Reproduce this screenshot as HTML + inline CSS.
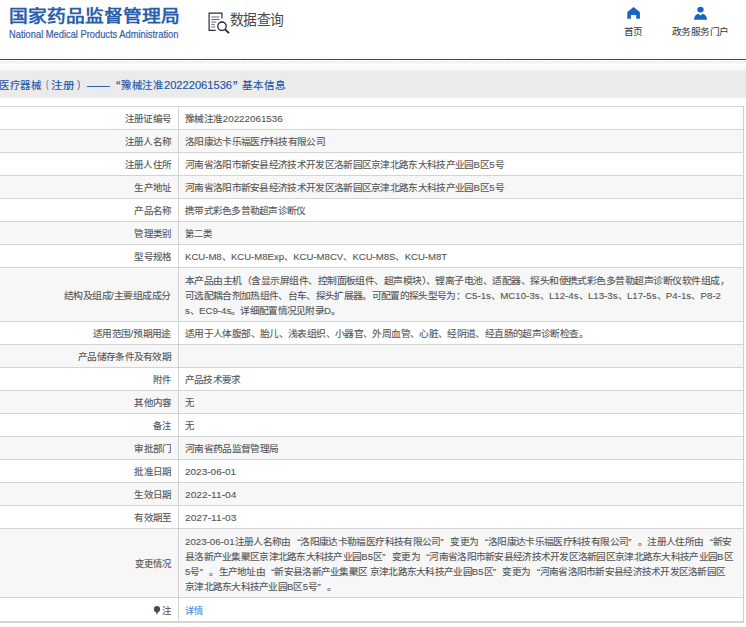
<!DOCTYPE html>
<html lang="zh-CN"><head><meta charset="utf-8">
<style>
*{margin:0;padding:0;box-sizing:border-box}
html,body{width:746px;height:627px;overflow:hidden;background:#fff;font-family:"Liberation Sans",sans-serif;color:#333;position:relative}
.abs{position:absolute}
#logo1{position:absolute;left:9px;top:6px;font-size:16.8px;transform-origin:0 0;font-weight:bold;color:#2a5eab;white-space:nowrap;line-height:22px}
#logo2{position:absolute;left:9px;top:28.8px;font-size:10px;transform-origin:0 0;color:#3560a8;-webkit-text-stroke:0.2px #3560a8;white-space:nowrap;line-height:11px}
#sqt{position:absolute;transform-origin:0 0;left:230px;top:10.3px;font-size:14.5px;color:#4a4a4a;line-height:20px;white-space:nowrap}
.nav{position:absolute;transform-origin:0 0;top:26.7px;font-size:9.2px;color:#333;line-height:11px;white-space:nowrap}
#bl{position:absolute;left:0;top:59px;width:746px;height:1px;background:#234f7c;box-shadow:0 -2px 2px #effbfd}
#hatch{position:absolute;left:0;top:61px;width:746px;height:2px;background:repeating-linear-gradient(135deg,#fff 0,#fff 1.3px,#e2e2e2 1.3px,#e2e2e2 2.33px)}
#grad{position:absolute;left:0;top:64px;width:746px;height:7px;background:linear-gradient(#fff,#f3f3f3)}
#bar{position:absolute;left:0;top:71px;width:746px;height:27px;background:#ebebeb}
.bp{position:absolute;transform-origin:0 0;top:78px;font-size:10.7px;color:#1d56a8;-webkit-text-stroke:0.15px #1d56a8;line-height:14px;white-space:nowrap}
.row{position:absolute;left:0;width:743px;background:#f7f7f7}
.hl{position:absolute;left:0;width:743px;height:1px;background:#d3d2d4}
#vl{position:absolute;left:178px;top:106px;width:1px;height:515px;background:#d3d2d4}
#rb{position:absolute;left:743px;top:106px;width:1px;height:516px;background:#d0d0d0}
#bb{position:absolute;left:0;top:621px;width:744px;height:2px;background:#d4d4d4}
.lab{position:absolute;right:575px;font-size:9.35px;line-height:15.1px;color:#555;-webkit-text-stroke:0.1px #555;white-space:nowrap;transform-origin:100% 50%}
.val{position:absolute;left:185px;font-size:9.35px;line-height:15.1px;color:#555;-webkit-text-stroke:0.1px #555;white-space:nowrap;transform-origin:0 50%}
.link{color:#3a8ae0;-webkit-text-stroke-color:#3a8ae0}
.qo{display:inline-block;width:1em;text-align:right}
.qc{display:inline-block;width:1em;text-align:left}
.pin{display:inline-block;width:5px;height:6px;border-radius:50% 50% 50% 50%/60% 60% 40% 40%;background:#555;margin-right:1px;vertical-align:-1px}
</style></head><body>
<div id="logo1" style="transform:scaleX(1.1173)">国家药品监督管理局</div>
<div id="logo2" style="transform:scaleX(0.9321)">National Medical Products Administration</div>
<svg class="abs" style="left:208px;top:11.5px" width="24" height="24" viewBox="0 0 24 24">
 <path d="M7.7 18.3H1.1V1.2H13.9V6.6" fill="none" stroke="#2b2b36" stroke-width="1.2"/>
 <path d="M3.3 5H11.5M3.3 7.5H11.5M3.3 10H8.2M3.3 12.4H6.8M3.3 14.9H7.2" stroke="#555560" stroke-width="0.9"/>
 <circle cx="14" cy="14.2" r="4.2" fill="none" stroke="#22222c" stroke-width="1.3"/>
 <path d="M17.1 17.3L21 21.2" stroke="#22222c" stroke-width="1.8"/>
</svg>
<div id="sqt" style="transform:scaleX(0.9542)">数据查询</div>
<svg class="abs" style="left:626px;top:6px" width="15" height="14" viewBox="0 0 15 14">
 <path d="M7.6 1.1L13.9 6.1V12.7H10.2V9H4.9V12.7H1.3V6.1Z" fill="#1764c4"/>
</svg>
<div class="nav" id="nav1" style="left:624px;transform:scaleX(1.0511)">首页</div>
<svg class="abs" style="left:693px;top:6px" width="15" height="14" viewBox="0 0 15 14">
 <ellipse cx="7.5" cy="3.6" rx="3.2" ry="2.9" fill="#1764c4"/>
 <path d="M1 13.7C1 10.6 2.8 8.6 5.2 7.8L7.5 9.4L9.8 7.8C12.2 8.6 14 10.6 14 13.7Z" fill="#1764c4"/>
</svg>
<div class="nav" id="nav2" style="left:672px;transform:scaleX(1.0541)">政务服务门户</div>
<div id="bl"></div>
<svg class="abs" style="left:0;top:60px" width="746" height="5"><defs><pattern id="hp" width="3.3" height="5" patternUnits="userSpaceOnUse"><path d="M0.1 3.5L2.5 1.1" stroke="#d9d9d9" stroke-width="0.85"/></pattern></defs><rect width="746" height="5" fill="url(#hp)"/></svg>
<div id="grad"></div>
<div id="bar"></div>
<div class="bp" id="b0" style="left:-1.00px;transform:scaleX(0.9732)">医疗器械</div>
<div class="bp" id="b1" style="left:41.70px;transform:scaleX(0.6075)">（</div>
<div class="bp" id="b2" style="left:51.31px;transform:scaleX(1.0821)">注册</div>
<div class="bp" id="b3" style="left:76.88px;transform:scaleX(0.8008)">）</div>
<div class="bp" id="b4" style="left:87.22px;transform:scaleX(1.0546)">——</div>
<div class="bp" id="b5" style="left:116.14px;transform:scaleX(0.9633);font-size:14px;top:79px">“</div>
<div class="bp" id="b6" style="left:120.59px;transform:scaleX(0.9637)">豫械注准</div>
<div class="bp" id="b7" style="left:164.48px;transform:scaleX(1.0400)">20222061536</div>
<div class="bp" id="b8" style="left:232.66px;transform:scaleX(0.9633);font-size:14px;top:79px">”</div>
<div class="bp" id="b9" style="left:241.99px;transform:scaleX(0.9867)">基本信息</div>
<div class="lab" id="l0" style="top:112.45px;transform:scaleX(1.0216)">注册证编号</div>
<div class="val" id="v0_0" style="top:112.45px;transform:scaleX(1.0489)">豫械注准20222061536</div>
<div class="row" style="top:129px;height:23px"></div>
<div class="lab" id="l1" style="top:135.45px;transform:scaleX(1.0216)">注册人名称</div>
<div class="val" id="v1_0" style="top:135.45px;transform:scaleX(1.0375)">洛阳康达卡乐福医疗科技有限公司</div>
<div class="lab" id="l2" style="top:158.45px;transform:scaleX(1.0216)">注册人住所</div>
<div class="val" id="v2_0" style="top:158.45px;transform:scaleX(1.0343)">河南省洛阳市新安县经济技术开发区洛新园区京津北路东大科技产业园B区5号</div>
<div class="row" style="top:175px;height:23px"></div>
<div class="lab" id="l3" style="top:181.45px;transform:scaleX(1.0150)">生产地址</div>
<div class="val" id="v3_0" style="top:181.45px;transform:scaleX(1.0343)">河南省洛阳市新安县经济技术开发区洛新园区京津北路东大科技产业园B区5号</div>
<div class="lab" id="l4" style="top:204.45px;transform:scaleX(1.0150)">产品名称</div>
<div class="val" id="v4_0" style="top:204.45px;transform:scaleX(1.0279)">携带式彩色多普勒超声诊断仪</div>
<div class="row" style="top:221px;height:23px"></div>
<div class="lab" id="l5" style="top:227.45px;transform:scaleX(1.0150)">管理类别</div>
<div class="val" id="v5_0" style="top:227.45px;transform:scaleX(0.9933)">第二类</div>
<div class="lab" id="l6" style="top:250.45px;transform:scaleX(1.0150)">型号规格</div>
<div class="val" id="v6_0" style="top:250.45px;transform:scaleX(1.0236)">KCU-M8、KCU-M8Exp、KCU-M8CV、KCU-M8S、KCU-M8T</div>
<div class="row" style="top:267px;height:54px"></div>
<div class="lab" id="l7" style="top:288.95px;transform:scaleX(1.0531)">结构及组成/主要组成成分</div>
<div class="val" id="v7_0" style="top:273.85px;transform:scaleX(1.0522)">本产品由主机（含显示屏组件、控制面板组件、超声模块）、锂离子电池、适配器、探头和便携式彩色多普勒超声诊断仪软件组成，</div>
<div class="val" id="v7_1" style="top:288.95px;transform:scaleX(1.0374)">可选配耦合剂加热组件、台车、探头扩展器。可配置的探头型号为：C5-1s、MC10-3s、L12-4s、L13-3s、L17-5s、P4-1s、P8-2</div>
<div class="val" id="v7_2" style="top:304.05px;transform:scaleX(1.0305)">s、EC9-4s。详细配置情况见附录D。</div>
<div class="lab" id="l8" style="top:327.45px;transform:scaleX(1.0389)">适用范围/预期用途</div>
<div class="val" id="v8_0" style="top:327.45px;transform:scaleX(1.0412)">适用于人体腹部、胎儿、浅表组织、小器官、外周血管、心脏、经阴道、经直肠的超声诊断检查。</div>
<div class="row" style="top:344px;height:23px"></div>
<div class="lab" id="l9" style="top:350.45px;transform:scaleX(1.0323)">产品储存条件及有效期</div>
<div class="lab" id="l10" style="top:373.45px;transform:scaleX(0.9835)">附件</div>
<div class="val" id="v10_0" style="top:373.45px;transform:scaleX(1.0271)">产品技术要求</div>
<div class="row" style="top:390px;height:23px"></div>
<div class="lab" id="l11" style="top:396.45px;transform:scaleX(1.0150)">其他内容</div>
<div class="val" id="v11_0" style="top:396.45px;transform:scaleX(0.9954)">无</div>
<div class="lab" id="l12" style="top:419.45px;transform:scaleX(0.9835)">备注</div>
<div class="val" id="v12_0" style="top:419.45px;transform:scaleX(0.9954)">无</div>
<div class="row" style="top:436px;height:23px"></div>
<div class="lab" id="l13" style="top:442.45px;transform:scaleX(1.0150)">审批部门</div>
<div class="val" id="v13_0" style="top:442.45px;transform:scaleX(1.0383)">河南省药品监督管理局</div>
<div class="lab" id="l14" style="top:465.45px;transform:scaleX(1.0150)">批准日期</div>
<div class="val" id="v14_0" style="top:465.45px;transform:scaleX(1.0700)">2023-06-01</div>
<div class="row" style="top:482px;height:23px"></div>
<div class="lab" id="l15" style="top:488.45px;transform:scaleX(1.0150)">生效日期</div>
<div class="val" id="v15_0" style="top:488.45px;transform:scaleX(1.0927)">2022-11-04</div>
<div class="lab" id="l16" style="top:511.45px;transform:scaleX(1.0150)">有效期至</div>
<div class="val" id="v16_0" style="top:511.45px;transform:scaleX(1.0927)">2027-11-03</div>
<div class="row" style="top:528px;height:69px"></div>
<div class="lab" id="l17" style="top:557.45px;transform:scaleX(0.9891)">变更情况</div>
<div class="val" id="v17_0" style="top:534.80px;transform:scaleX(1.0384)">2023-06-01注册人名称由<span class="qo">“</span>洛阳康达卡勒福医疗科技有限公司<span class="qc">”</span>变更为<span class="qo">“</span>洛阳康达卡乐福医疗科技有限公司<span class="qc">”</span>。注册人住所由<span class="qo">“</span>新安</div>
<div class="val" id="v17_1" style="top:549.90px;transform:scaleX(1.0310)">县洛新产业集聚区京津北路东大科技产业园B5区<span class="qc">”</span>变更为<span class="qo">“</span>河南省洛阳市新安县经济技术开发区洛新园区京津北路东大科技产业园B区</div>
<div class="val" id="v17_2" style="top:565.00px;transform:scaleX(1.0298)">5号<span class="qc">”</span>。生产地址由<span class="qo">“</span>新安县洛新产业集聚区 京津北路东大科技产业园B5区<span class="qc">”</span>变更为<span class="qo">“</span>河南省洛阳市新安县经济技术开发区洛新园区</div>
<div class="val" id="v17_3" style="top:580.10px;transform:scaleX(1.0307)">京津北路东大科技产业园B区5号<span class="qc">”</span>。</div>
<div class="lab" id="l18" style="top:603.95px">注</div><svg class="abs" style="left:153px;top:605px" width="8" height="10" viewBox="0 0 8 10"><ellipse cx="4" cy="4.1" rx="3.1" ry="3.2" fill="#4a4a52"/><path d="M2.6 6.5H5.4L4.8 8H3.2Z" fill="#4a4a52"/><rect x="3.1" y="8.4" width="1.8" height="0.9" fill="#666"/></svg>
<div class="val link" id="v18_0" style="top:603.95px;transform:scaleX(0.9752)">详情</div>
<div class="hl" style="top:106px"></div>
<div class="hl" style="top:129px"></div>
<div class="hl" style="top:152px"></div>
<div class="hl" style="top:175px"></div>
<div class="hl" style="top:198px"></div>
<div class="hl" style="top:221px"></div>
<div class="hl" style="top:244px"></div>
<div class="hl" style="top:267px"></div>
<div class="hl" style="top:321px"></div>
<div class="hl" style="top:344px"></div>
<div class="hl" style="top:367px"></div>
<div class="hl" style="top:390px"></div>
<div class="hl" style="top:413px"></div>
<div class="hl" style="top:436px"></div>
<div class="hl" style="top:459px"></div>
<div class="hl" style="top:482px"></div>
<div class="hl" style="top:505px"></div>
<div class="hl" style="top:528px"></div>
<div class="hl" style="top:597px"></div>
<div id="vl"></div>
<div id="rb"></div>
<div id="bb"></div>
</body></html>
